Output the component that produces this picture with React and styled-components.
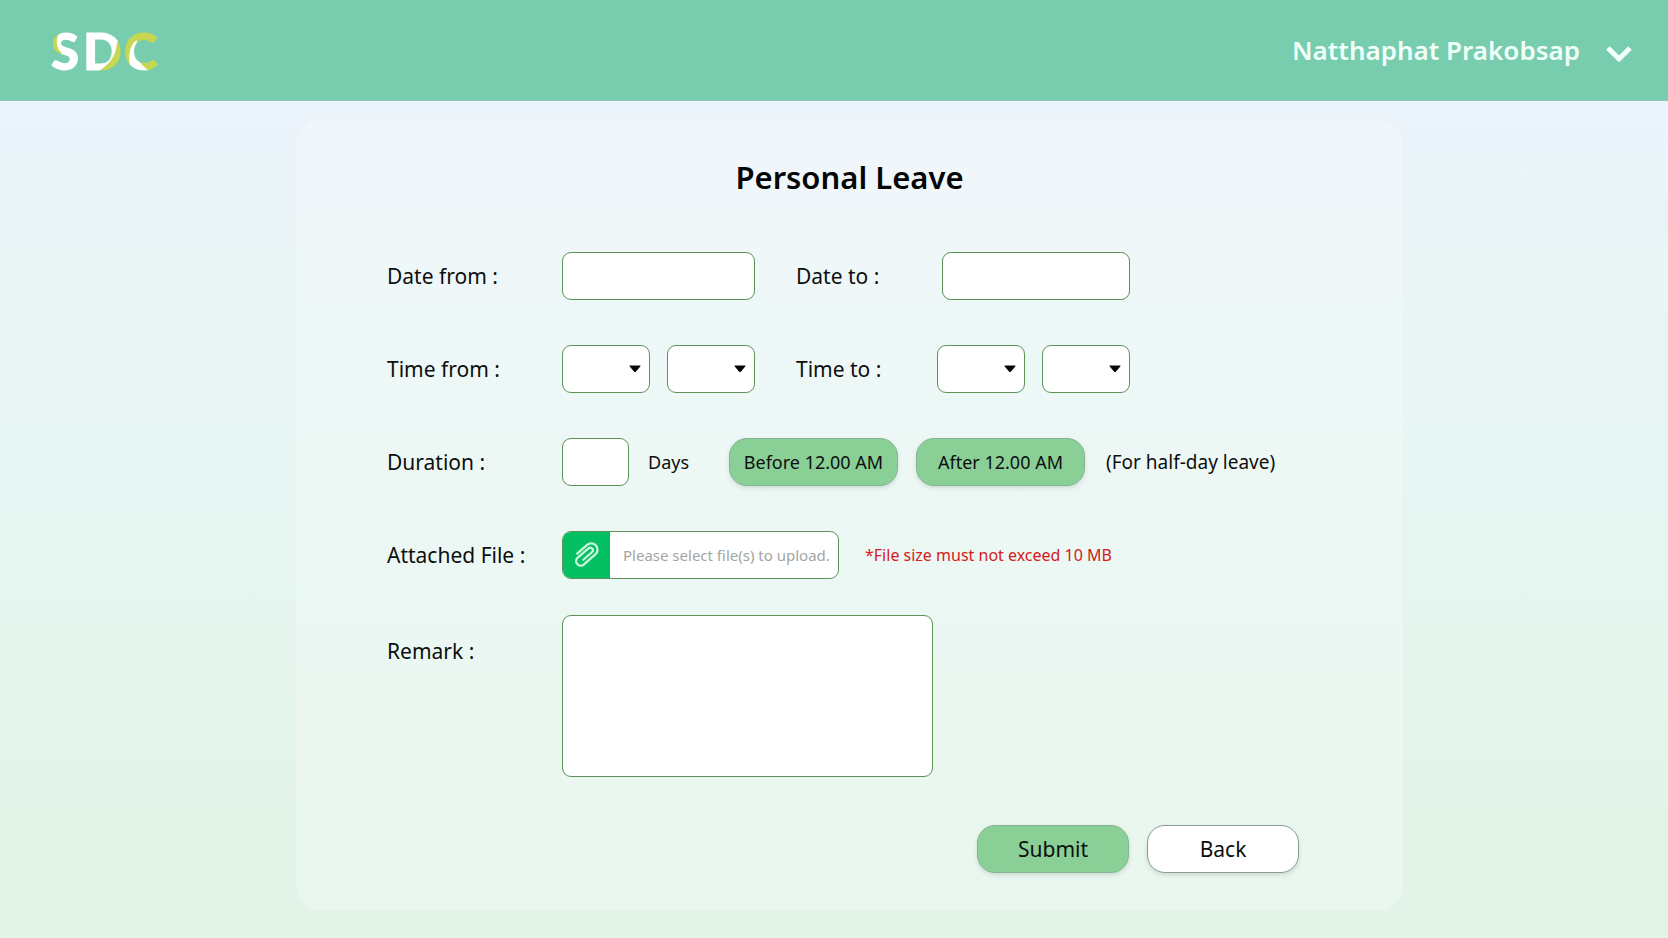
import React from "react";
import styled, { createGlobalStyle } from "styled-components";

const GlobalStyle = createGlobalStyle`
  *, *::before, *::after { box-sizing: border-box; }
  body { margin: 0; }
  body, button, input, select, textarea {
    font-family: "Noto Sans", "Open Sans", sans-serif;
    color: #0d0f0e;
  }
`;

const Page = styled.div`
  min-height: 100vh;
  display: flex;
  flex-direction: column;
  background: linear-gradient(#ebf3fb 110px, #e9f4f6 250px, #e6f5f2 480px, #e2f4e8 820px);
`;

const Header = styled.header`
  display: flex;
  align-items: center;
  justify-content: space-between;
  height: 101px;
  padding: 0 36px 0 50px;
  background: #77cdad;
  border-bottom: 1px solid #8fc8b6;
`;

const HomeLink = styled.a`
  display: flex;
`;

const AccountButton = styled.button`
  display: flex;
  align-items: center;
  gap: 26px;
  padding: 0;
  border: 0;
  background: none;
  color: #f1fffa;
  font-size: 26px;
  font-weight: 600;
  line-height: 40px;
`;

const Main = styled.main`
  flex: 1;
  display: grid;
  grid-template-columns: 296fr 1107fr 265fr;
  align-items: start;
  padding: 18px 0 27px;
`;

const Panel = styled.form`
  grid-column: 2;
  padding: 34px 104px 38px 91px;
  border-radius: 26px;
  background: rgba(255, 255, 255, 0.28);
`;

const Title = styled.h1`
  margin: 0 0 51px;
  padding-left: 13px;
  color: #050606;
  font-size: 31px;
  font-weight: 600;
  line-height: 48px;
  text-align: center;
`;

const Fields = styled.div`
  display: flex;
  flex-direction: column;
  gap: 45px;
`;

const Row = styled.div`
  display: flex;
  align-items: center;
`;

const Label = styled.label`
  flex: none;
  width: ${(p) => p.$width || 175}px;
  font-size: 21px;
  line-height: 28px;
  white-space: nowrap;
`;

const Pair = styled.div`
  display: flex;
  gap: 17px;
  margin-left: ${(p) => (p.$end ? "auto" : 0)};
`;

const SecondHalf = styled.div`
  display: flex;
  align-items: center;
  width: 334px;
  margin-left: 41px;
`;

const TextField = styled.input`
  width: ${(p) => p.$width}px;
  height: 48px;
  padding: 0 12px;
  border: 1px solid #5d9258;
  border-radius: 9px;
  background: #fff;
  font-size: 18px;
  margin-left: ${(p) => (p.$end ? "auto" : 0)};
`;

const SelectBox = styled.span`
  display: grid;
  align-items: center;
  width: 88px;

  > * { grid-area: 1 / 1; }
  > svg {
    justify-self: end;
    margin-right: 9px;
    pointer-events: none;
  }
`;

const Select = styled.select`
  width: 100%;
  height: 48px;
  padding: 0 24px 0 12px;
  border: 1px solid #5d9258;
  border-radius: 9px;
  background: #fff;
  font-size: 18px;
  appearance: none;
`;

const DurationUnit = styled.span`
  width: 100px;
  padding-left: 19px;
  font-size: 18px;
  line-height: 28px;
`;

const PillButton = styled.button`
  width: ${(p) => p.$width}px;
  height: 48px;
  padding: 0;
  border: 1px solid ${(p) => (p.$plain ? "#8d9a94" : "#84b394")};
  border-radius: 18px;
  background: ${(p) => (p.$plain ? "#fff" : "#8ad096")};
  box-shadow: 0 2px 4px rgba(40, 90, 60, 0.16);
  font-size: ${(p) => p.$size}px;
  line-height: 28px;
  white-space: nowrap;
`;

const Choices = styled.div`
  display: flex;
  gap: 18px;
`;

const Note = styled.span`
  padding-left: 21px;
  font-size: 19px;
  line-height: 28px;
  white-space: nowrap;
`;

const FilePicker = styled.label`
  display: flex;
  align-items: center;
  width: 277px;
  height: 48px;
  overflow: hidden;
  border: 1px solid #5d9258;
  border-radius: 9px;
  background: #fff;
  color: #a3a5a4;
  font-size: 15px;
  line-height: 24px;
  white-space: nowrap;
`;

const HiddenFile = styled.input`
  width: 0;
  height: 0;
  opacity: 0;
  margin: 0;
  padding: 0;
`;

const ClipCell = styled.span`
  display: flex;
  align-items: center;
  justify-content: center;
  width: 47px;
  height: 100%;
  margin-right: 13px;
  background: #05c063;
  border-right: 1px solid #3f9c55;
`;

const Warning = styled.span`
  padding-left: 26px;
  color: #d42020;
  font-size: 16px;
  line-height: 24px;
  white-space: nowrap;
`;

const RemarkRow = styled.div`
  display: flex;
  align-items: flex-start;
  margin-top: 36px;

  > label { padding-top: 22px; }
`;

const Remark = styled.textarea`
  width: 371px;
  height: 162px;
  padding: 12px;
  border: 1px solid #5d9258;
  border-radius: 9px;
  background: #fff;
  font-size: 18px;
  resize: none;
`;

const Actions = styled.div`
  display: flex;
  justify-content: flex-end;
  gap: 18px;
  margin-top: 48px;
`;

function Logo() {
  return (
    <svg width="112" height="68" viewBox="0 -14 112 68" role="img" aria-label="SDC">
      <defs>
        <pattern id="two-tone" patternUnits="userSpaceOnUse" width="112" height="54">
          <rect width="112" height="54" fill="#fff" />
          <path d="M12 0C5 6 5 18 12 23L6 26L-2 18L0 0Z" fill="#c8d752" />
          <path d="M67 12C67 22 62 34 47 42L62 44L72 32L72 12Z" fill="#c8d752" />
          <rect x="73" width="39" height="54" fill="#c8d752" />
          <path d="M87 10C79 14 77 30 82 42L101 42C92 36 86 30 86 20Z" fill="#fff" />
        </pattern>
      </defs>
      <text
        x="1 33 74"
        y="40"
        fontFamily="Lato, sans-serif"
        fontSize="51"
        fontWeight="900"
        fill="url(#two-tone)"
        stroke="url(#two-tone)"
        strokeWidth="1"
      >
        SDC
      </text>
    </svg>
  );
}

function Chevron() {
  return (
    <svg width="26" height="26" viewBox="0 0 26 26" fill="none" aria-hidden="true">
      <path d="M2 11L13 22L24 11" stroke="#f1fffa" strokeWidth="5" strokeLinejoin="round" />
    </svg>
  );
}

function Clip() {
  return (
    <svg width="32" height="32" viewBox="0 0 28 28" fill="none" aria-hidden="true">
      <path
        d="M9 8H20.5a5.5 5.5 0 0 1 0 11H7a4 4 0 0 1 0-8H19.5a2.2 2.2 0 0 1 0 4.6H9.5"
        transform="rotate(-41 14 14)"
        stroke="#c9f7dc"
        strokeWidth="2"
        strokeLinecap="round"
        strokeLinejoin="round"
      />
    </svg>
  );
}

function TimeSelect({ id, label }) {
  return (
    <SelectBox>
      <Select id={id} aria-label={label} defaultValue="">
        <option value="" />
      </Select>
      <svg width="12" height="8" viewBox="0 0 12 8" aria-hidden="true">
        <path d="M1 0.5H11Q12 0.8 11.3 1.6L7 6.6Q6 7.6 5 6.6L0.7 1.6Q0 0.8 1 0.5Z" fill="#060806" />
      </svg>
    </SelectBox>
  );
}

export default function App() {
  return (
    <Page>
      <GlobalStyle />
      <Header>
        <HomeLink href="#home">
          <Logo />
        </HomeLink>
        <AccountButton type="button">
          Natthaphat Prakobsap
          <Chevron />
        </AccountButton>
      </Header>
      <Main>
        <Panel onSubmit={(e) => e.preventDefault()}>
          <Title>Personal Leave</Title>
          <Fields>
            <Row>
              <Label htmlFor="date-from">Date from :</Label>
              <TextField id="date-from" type="text" $width={193} />
              <SecondHalf>
                <Label htmlFor="date-to" $width={100}>Date to :</Label>
                <TextField id="date-to" type="text" $width={188} $end />
              </SecondHalf>
            </Row>
            <Row>
              <Label htmlFor="time-from">Time from :</Label>
              <Pair>
                <TimeSelect id="time-from" label="Time from, hour" />
                <TimeSelect id="time-from-minute" label="Time from, minute" />
              </Pair>
              <SecondHalf>
                <Label htmlFor="time-to" $width={100}>Time to :</Label>
                <Pair $end>
                  <TimeSelect id="time-to" label="Time to, hour" />
                  <TimeSelect id="time-to-minute" label="Time to, minute" />
                </Pair>
              </SecondHalf>
            </Row>
            <Row>
              <Label htmlFor="duration">Duration :</Label>
              <TextField id="duration" type="text" $width={67} />
              <DurationUnit>Days</DurationUnit>
              <Choices>
                <PillButton type="button" $width={169} $size={18}>Before 12.00 AM</PillButton>
                <PillButton type="button" $width={169} $size={18}>After 12.00 AM</PillButton>
              </Choices>
              <Note>(For half-day leave)</Note>
            </Row>
            <Row>
              <Label htmlFor="attachment">Attached File :</Label>
              <FilePicker>
                <HiddenFile id="attachment" type="file" multiple />
                <ClipCell>
                  <Clip />
                </ClipCell>
                Please select file(s) to upload.
              </FilePicker>
              <Warning>*File size must not exceed 10 MB</Warning>
            </Row>
          </Fields>
          <RemarkRow>
            <Label htmlFor="remark">Remark :</Label>
            <Remark id="remark" />
          </RemarkRow>
          <Actions>
            <PillButton type="submit" $width={152} $size={21}>Submit</PillButton>
            <PillButton type="button" $width={152} $size={21} $plain>Back</PillButton>
          </Actions>
        </Panel>
      </Main>
    </Page>
  );
}
